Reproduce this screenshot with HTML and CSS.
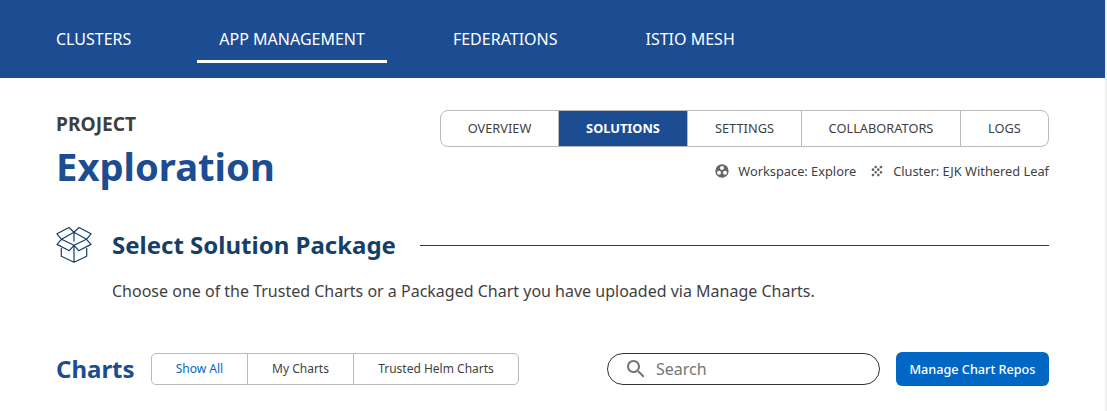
FILE: index.html
```html
<!DOCTYPE html>
<html lang="en">
<head>
<meta charset="utf-8">
<title>Exploration</title>
<link rel="stylesheet" href="styles.css">
</head>
<body>
<div class="page">
<nav class="topnav">
  <a class="nav-item">CLUSTERS</a>
  <a class="nav-item active">APP MANAGEMENT</a>
  <a class="nav-item">FEDERATIONS</a>
  <a class="nav-item">ISTIO MESH</a>
</nav>
<main class="content">
  <header class="project">
    <div class="heading">
      <div class="eyebrow">PROJECT</div>
      <h1 class="title">Exploration</h1>
    </div>
    <div class="project-side">
      <div class="tabs">
        <a class="tab t-overview">OVERVIEW</a>
        <a class="tab t-solutions selected">SOLUTIONS</a>
        <a class="tab t-settings">SETTINGS</a>
        <a class="tab t-collab">COLLABORATORS</a>
        <a class="tab t-logs">LOGS</a>
      </div>
      <div class="meta">
        <svg class="workspace-icon" viewBox="0 0 24 24"><circle cx="12" cy="12" r="10"/><g class="holes"><circle cx="12" cy="7.500" r="3"/><circle cx="7.500" cy="14.500" r="3"/><circle cx="16.500" cy="14.500" r="3"/></g></svg>
        <span class="workspace">Workspace: Explore</span>
        <svg class="cluster-icon" viewBox="0 0 24 24"><path d="M10 12c-1.100 0-2 .9-2 2s.9 2 2 2 2-.9 2-2-.9-2-2-2zM6 8c-1.100 0-2 .9-2 2s.9 2 2 2 2-.9 2-2-.9-2-2-2zm0 8c-1.100 0-2 .9-2 2s.9 2 2 2 2-.9 2-2-.9-2-2-2zm12-8c1.100 0 2-.9 2-2s-.9-2-2-2-2 .9-2 2 .9 2 2 2zm-4 8c-1.100 0-2 .9-2 2s.9 2 2 2 2-.9 2-2-.9-2-2-2zm4-4c-1.100 0-2 .9-2 2s.9 2 2 2 2-.9 2-2-.9-2-2-2zm-4-4c-1.100 0-2 .9-2 2s.9 2 2 2 2-.9 2-2-.9-2-2-2zm-4-4c-1.100 0-2 .9-2 2s.9 2 2 2 2-.9 2-2-.9-2-2-2z"/></svg>
        <span>Cluster: EJK Withered Leaf</span>
      </div>
    </div>
  </header>
  <div class="section-head">
    <svg class="box-icon" viewBox="0 0 36 37"><path d="M5.500 13.300 1 7.800 13 1.500 18 6.200ZM30.500 13.300 35 7.800 23 1.500 18 6.200ZM5.500 13.300 1 18.400 13.300 24.700 18 19.300ZM30.500 13.300 35 18.400 22.700 24.700 18 19.300ZM5.300 20.500V30.300L18 36.200 30.700 30.300V20.500M18 19.300V36.200M18 6.200V15.500"/></svg>
    <h2 class="section-title">Select Solution Package</h2>
    <span class="rule"></span>
  </div>
  <p class="lead">Choose one of the Trusted Charts or a Packaged Chart you have uploaded via Manage Charts.</p>
  <div class="toolbar">
    <h3 class="charts-title">Charts</h3>
    <div class="filters">
      <a class="filter f-all current">Show All</a>
      <a class="filter f-mine">My Charts</a>
      <a class="filter f-trusted">Trusted Helm Charts</a>
    </div>
    <div class="search">
      <svg class="search-icon" viewBox="0 0 24 24"><path d="M15.500 14h-.79l-.28-.27C15.410 12.590 16 11.110 16 9.500 16 5.910 13.090 3 9.500 3S3 5.910 3 9.500 5.910 16 9.500 16c1.610 0 3.090-.59 4.230-1.570l.27.28v.79l5 4.990L20.490 19l-4.990-5zm-6 0C7.010 14 5 11.990 5 9.500S7.010 5 9.500 5 14 7.010 14 9.500 11.990 14 9.500 14z"/></svg>
      <span>Search</span>
    </div>
    <button class="manage">Manage Chart Repos</button>
  </div>
</main>
</div>
</body>
</html>
```
FILE: styles.css
```css
* { box-sizing: border-box; }
body {
  margin: 0;
  font-family: "Noto Sans", sans-serif;
  color: #3f3f3f;
  background: #fff;
}
h1, h2, h3, p { margin: 0; }
.page {
  height: 411px;
  border-right: 2px solid #f1f1f1;
  overflow: hidden;
}
.topnav {
  display: flex;
  gap: 44px;
  height: 78px;
  padding: 16px 34px 15px;
  background: #1c4c92;
}
.nav-item {
  padding: 0 22px;
  font-size: 16px;
  line-height: 46px;
  color: #fff;
  border-bottom: 3px solid transparent;
  white-space: nowrap;
}
.nav-item.active { border-bottom-color: #fff; }
.content { padding: 32px 56px 0; }
.project {
  display: flex;
  justify-content: space-between;
  height: 116px;
}
.eyebrow {
  font-size: 19.2px;
  font-weight: 700;
  line-height: 27px;
}
.title {
  font-size: 38.2px;
  line-height: 58px;
  color: #1c4c92;
}
.project-side {
  display: flex;
  flex-direction: column;
  align-items: flex-end;
}
.tabs {
  display: flex;
  width: 609px;
  height: 37px;
  border: 1px solid #bababa;
  border-radius: 8px;
  overflow: hidden;
}
.tab {
  font-size: 12.8px;
  line-height: 35px;
  text-align: center;
  border-right: 1px solid #bababa;
}
.t-overview { width: 118px; }
.t-solutions { width: 129px; }
.t-settings { width: 114px; }
.t-collab { width: 159px; }
.t-logs { width: 87px; border-right: 0; }
.tab.selected {
  color: #fff;
  font-weight: 700;
  background: #1c4c92;
}
.meta {
  display: flex;
  align-items: center;
  margin-top: 15px;
  font-size: 12.8px;
  line-height: 18px;
}
.workspace-icon, .cluster-icon {
  width: 16px;
  height: 16px;
  margin-right: 8px;
  fill: #666;
}
.holes { fill: #fff; }
.workspace { margin-right: 13px; }
.section-head {
  display: flex;
  align-items: center;
  height: 37px;
}
.box-icon {
  width: 36px;
  height: 37px;
  margin-right: 20px;
  fill: none;
  stroke: #143f68;
  stroke-width: 1.2;
  stroke-linejoin: round;
}
.section-title {
  font-size: 24px;
  line-height: 36px;
  color: #143f68;
}
.rule {
  flex: 1;
  height: 1px;
  margin: 2px 0 0 24px;
  background: #143f68;
}
.lead {
  margin: 16px 0 0 56px;
  font-size: 16px;
  line-height: 24px;
}
.toolbar {
  display: flex;
  align-items: center;
  height: 34px;
  margin-top: 49px;
}
.charts-title {
  width: 95px;
  font-size: 24px;
  line-height: 34px;
  color: #1c4c92;
}
.filters {
  display: flex;
  width: 368px;
  height: 32px;
  border: 1px solid #bababa;
  border-radius: 5px;
}
.filter {
  font-size: 12px;
  line-height: 30px;
  text-align: center;
  border-right: 1px solid #bababa;
}
.filter.current { color: #0067c5; }
.f-all { width: 96px; }
.f-mine { width: 106px; }
.f-trusted { width: 164px; border-right: 0; }
.search {
  display: flex;
  align-items: center;
  width: 273px;
  height: 32px;
  margin-left: auto;
  padding-left: 16px;
  border: 1px solid #333;
  border-radius: 16px;
  font-size: 16px;
  color: #757575;
}
.search-icon {
  width: 24px;
  height: 24px;
  margin-right: 8px;
  fill: #757575;
}
.manage {
  width: 153px;
  height: 34px;
  margin-left: 16px;
  padding: 0;
  border: 0;
  border-radius: 6px;
  font-family: inherit;
  font-size: 12.65px;
  font-weight: 500;
  color: #fff;
  background: #0067c5;
}
```
